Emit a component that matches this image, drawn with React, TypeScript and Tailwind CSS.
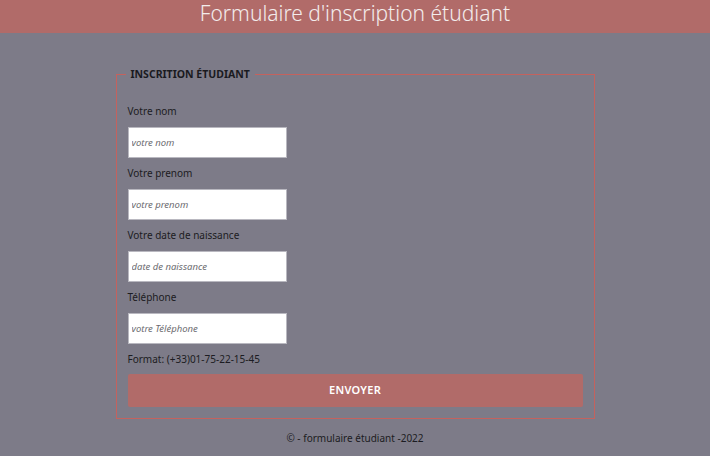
import React from 'react';

const fields = [
  { label: 'Votre nom', placeholder: 'votre nom' },
  { label: 'Votre prenom', placeholder: 'votre prenom' },
  { label: 'Votre date de naissance', placeholder: 'date de naissance' },
  { label: 'Téléphone', placeholder: 'votre Téléphone' },
];

const App: React.FC = () => {
  return (
    <div className="min-h-[456px] bg-[#7d7b88] font-['Noto_Sans',sans-serif] text-[#1c1c22]">
      <header className="h-[33px] bg-[#b16b69] flex justify-center">
        <h1 className="text-[21px] leading-[26px] font-light text-[#f3ecec]">
          Formulaire d'inscription étudiant
        </h1>
      </header>

      <form className="pt-[34px]">
        <fieldset className="w-[479px] mx-auto border border-[#c4625e] px-[11px] pt-[23px] pb-[11px]">
          <legend className="-ml-[2px] px-[5px] text-[10.5px] leading-[14px] font-bold uppercase text-[#1a1a1f]">
            Inscrition étudiant
          </legend>

          {fields.map((f) => (
            <div key={f.label} className="mb-[8px]">
              <label className="block text-[10px] leading-[14px]">{f.label}</label>
              <input
                type="text"
                placeholder={f.placeholder}
                className="mt-[9px] block w-[159px] h-[31px] bg-white border border-[#b9b8c0] px-[3px] text-[9.5px] italic placeholder:text-[#6b6b70] outline-none"
              />
            </div>
          ))}

          <p className="text-[10px] leading-[14px]">Format: (+33)01-75-22-15-45</p>

          <button
            type="button"
            className="mt-[8px] w-full h-[33px] rounded-[2px] bg-[#b16b69] text-white text-[11px] font-semibold tracking-wide"
          >
            ENVOYER
          </button>
        </fieldset>
      </form>

      <footer className="mt-[12px] text-center text-[10px] leading-[14px]">
        © - formulaire étudiant -2022
      </footer>
    </div>
  );
};

export default App;
